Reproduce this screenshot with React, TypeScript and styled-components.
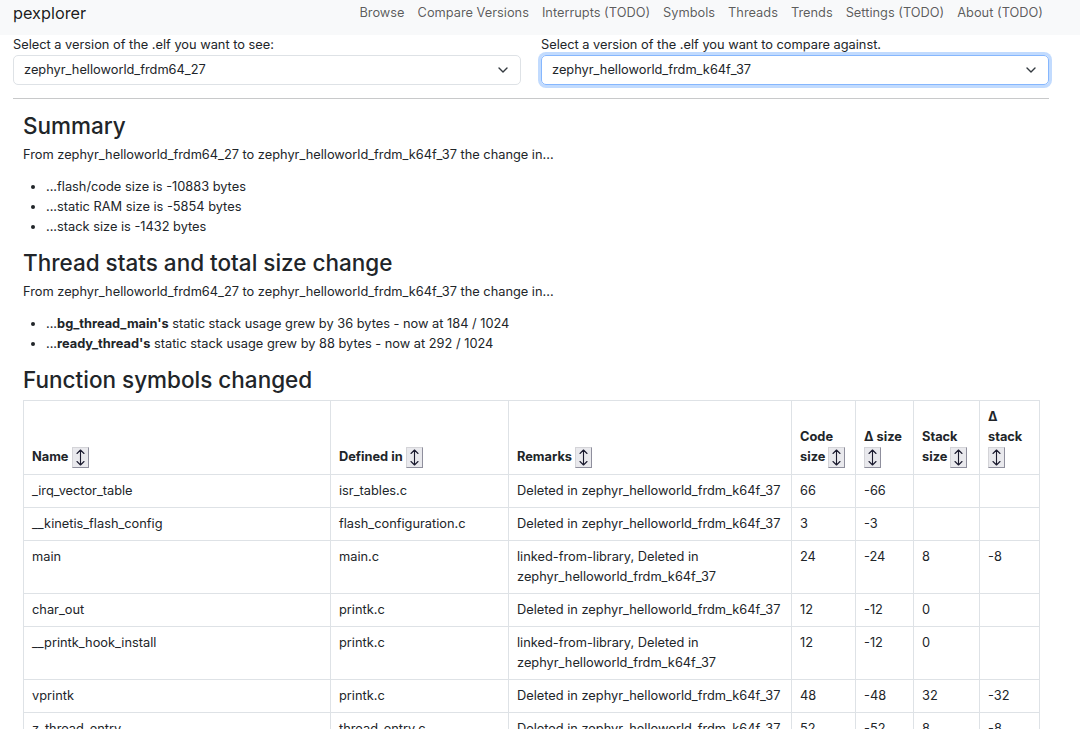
import styled, { createGlobalStyle } from "styled-components";

const GlobalStyle = createGlobalStyle`
  body {
    margin: 0;
    font-family: Inter, "Noto Sans", sans-serif;
    font-size: 12.8px;
    line-height: 20px;
    color: #212529;
    background: #fff;
  }
`;

const navLinks = [
  "Browse",
  "Compare Versions",
  "Interrupts (TODO)",
  "Symbols",
  "Threads",
  "Trends",
  "Settings (TODO)",
  "About (TODO)",
];

type Row = {
  name: string;
  file: string;
  remarks: string;
  code: string;
  dSize: string;
  stack: string;
  dStack: string;
};

const deleted = "Deleted in zephyr_helloworld_frdm_k64f_37";
const linked = "linked-from-library, Deleted in zephyr_helloworld_frdm_k64f_37";

const rows: Row[] = [
  { name: "_irq_vector_table", file: "isr_tables.c", remarks: deleted, code: "66", dSize: "-66", stack: "", dStack: "" },
  { name: "__kinetis_flash_config", file: "flash_configuration.c", remarks: deleted, code: "3", dSize: "-3", stack: "", dStack: "" },
  { name: "main", file: "main.c", remarks: linked, code: "24", dSize: "-24", stack: "8", dStack: "-8" },
  { name: "char_out", file: "printk.c", remarks: deleted, code: "12", dSize: "-12", stack: "0", dStack: "" },
  { name: "__printk_hook_install", file: "printk.c", remarks: linked, code: "12", dSize: "-12", stack: "0", dStack: "" },
  { name: "vprintk", file: "printk.c", remarks: deleted, code: "48", dSize: "-48", stack: "32", dStack: "-32" },
  { name: "z_thread_entry", file: "thread_entry.c", remarks: deleted, code: "52", dSize: "-52", stack: "8", dStack: "-8" },
];

const columns = [
  { label: "Name", width: 307 },
  { label: "Defined in", width: 178 },
  { label: "Remarks", width: 283 },
  { label: "Code size", width: 64 },
  { label: "Δ size", width: 58 },
  { label: "Stack size", width: 66 },
  { label: "Δ stack", width: 60 },
];

const Chevron = () => (
  <svg width="10" height="6" viewBox="0 0 10 6" fill="none">
    <path d="M1 1l4 4 4-4" stroke="#343a40" strokeWidth="1.4" strokeLinecap="round" strokeLinejoin="round" />
  </svg>
);

const SortArrows = () => (
  <svg width="9" height="17" viewBox="0 0 9 17" fill="none">
    <path
      d="M4.5 1v15M1 4.5L4.5 1 8 4.5M1 12.5L4.5 16 8 12.5"
      stroke="#1b1b2f"
      strokeWidth="1.1"
      strokeLinecap="round"
      strokeLinejoin="round"
    />
  </svg>
);

const App = () => {
  return (
    <>
      <GlobalStyle />
      <Navbar>
        <Brand>pexplorer</Brand>
        <NavList>
          {navLinks.map((link) => (
            <NavLink key={link}>{link}</NavLink>
          ))}
        </NavList>
      </Navbar>
      <Page>
        <SelectRow>
          <SelectGroup>
            <Label>Select a version of the .elf you want to see:</Label>
            <SelectBox>
              zephyr_helloworld_frdm64_27
              <Chevron />
            </SelectBox>
          </SelectGroup>
          <SelectGroup>
            <Label>Select a version of the .elf you want to compare against.</Label>
            <SelectBox focused>
              zephyr_helloworld_frdm_k64f_37
              <Chevron />
            </SelectBox>
          </SelectGroup>
        </SelectRow>
        <Divider />
        <Content>
          <Heading>Summary</Heading>
          <Para>From zephyr_helloworld_frdm64_27 to zephyr_helloworld_frdm_k64f_37 the change in...</Para>
          <List>
            <li>...flash/code size is -10883 bytes</li>
            <li>...static RAM size is -5854 bytes</li>
            <li>...stack size is -1432 bytes</li>
          </List>
          <Heading>Thread stats and total size change</Heading>
          <Para>From zephyr_helloworld_frdm64_27 to zephyr_helloworld_frdm_k64f_37 the change in...</Para>
          <List>
            <li>
              ...<b>bg_thread_main's</b> static stack usage grew by 36 bytes - now at 184 / 1024
            </li>
            <li>
              ...<b>ready_thread's</b> static stack usage grew by 88 bytes - now at 292 / 1024
            </li>
          </List>
          <Heading>Function symbols changed</Heading>
          <Table>
            <colgroup>
              {columns.map((c) => (
                <col key={c.label} style={{ width: c.width }} />
              ))}
            </colgroup>
            <thead>
              <tr>
                {columns.map((c) => (
                  <HeadCell key={c.label}>
                    {c.label}{" "}
                    <SortButton>
                      <SortArrows />
                    </SortButton>
                  </HeadCell>
                ))}
              </tr>
            </thead>
            <tbody>
              {rows.map((r) => (
                <tr key={r.name}>
                  <Cell>{r.name}</Cell>
                  <Cell>{r.file}</Cell>
                  <Cell>{r.remarks}</Cell>
                  <Cell>{r.code}</Cell>
                  <Cell>{r.dSize}</Cell>
                  <Cell>{r.stack}</Cell>
                  <Cell>{r.dStack}</Cell>
                </tr>
              ))}
            </tbody>
          </Table>
        </Content>
      </Page>
    </>
  );
};

const Navbar = styled.nav`
  display: flex;
  align-items: flex-start;
  justify-content: space-between;
  box-sizing: border-box;
  height: 35px;
  padding: 4px 37px 0 13px;
  background-color: #f8f9fa;
`;

const Brand = styled.div`
  font-size: 16.3px;
  line-height: 18px;
  color: rgba(0, 0, 0, 0.9);
`;

const NavList = styled.div`
  display: flex;
  gap: 13px;
  line-height: 18px;
`;

const NavLink = styled.a`
  color: rgba(0, 0, 0, 0.65);
  cursor: pointer;
`;

const Page = styled.div`
  width: 1036px;
  margin-left: 13px;
`;

const SelectRow = styled.div`
  display: grid;
  grid-template-columns: 1fr 1fr;
  gap: 20px;
`;

const SelectGroup = styled.div`
  display: flex;
  flex-direction: column;
`;

const Label = styled.label`
  height: 20px;
`;

const SelectBox = styled.div<{ focused?: boolean }>`
  display: flex;
  align-items: center;
  justify-content: space-between;
  box-sizing: border-box;
  height: 30px;
  padding: 0 12px 0 10px;
  border: 1px solid ${({ focused }) => (focused ? "#86b7fe" : "#dee2e6")};
  border-radius: 5px;
  box-shadow: ${({ focused }) => (focused ? "0 0 0 3px rgba(13, 110, 253, 0.25)" : "none")};
`;

const Divider = styled.hr`
  margin: 13px 0 12px;
  border: 0;
  border-top: 1px solid #c8c9ca;
`;

const Content = styled.main`
  padding: 0 10px;
`;

const Heading = styled.h2`
  margin: 0 0 5px;
  font-size: 22.5px;
  line-height: 29px;
  font-weight: 500;
`;

const Para = styled.p`
  margin: 0 0 12px;
`;

const List = styled.ul`
  margin: 0 0 11px;
  padding-left: 23px;

  b {
    font-weight: 700;
  }
`;

const Table = styled.table`
  width: 1016px;
  table-layout: fixed;
  border-collapse: collapse;
  margin-top: 6px;
  border: 1px solid #dee2e6;
`;

const HeadCell = styled.th`
  padding: 6px 8px;
  border: 1px solid #dee2e6;
  text-align: left;
  vertical-align: bottom;
  font-weight: 700;
  line-height: 20px;
`;

const Cell = styled.td`
  padding: 6px 8px;
  border: 1px solid #dee2e6;
  vertical-align: top;
  line-height: 20px;
`;

const SortButton = styled.button`
  display: inline-flex;
  align-items: center;
  justify-content: center;
  box-sizing: border-box;
  width: 17px;
  height: 21px;
  padding: 0;
  vertical-align: middle;
  background: #e9e9ed;
  border: 1px solid;
  border-color: #d4d4d8 #8f8f9d #8f8f9d #d4d4d8;
  border-radius: 0;
`;

export default App;
